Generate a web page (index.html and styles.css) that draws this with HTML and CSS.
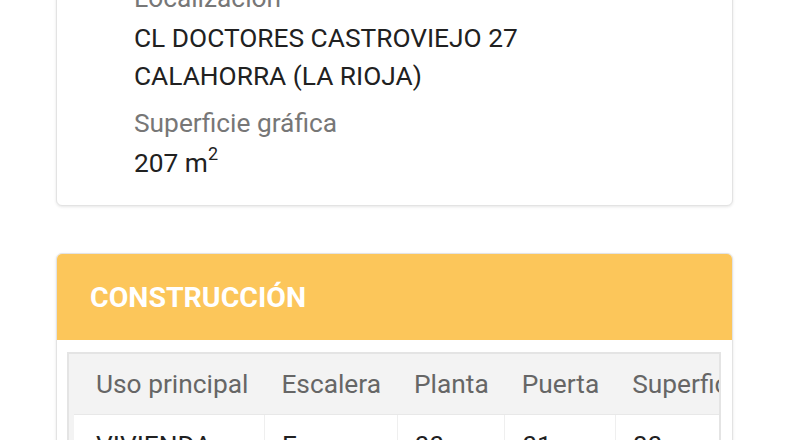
FILE: index.html
```html
<!DOCTYPE html>
<html lang="es">
<head>
    <meta charset="UTF-8">
    <meta name="viewport" content="width=device-width, initial-scale=1.0">
    <title>Consulta descriptiva</title>
    <link rel="stylesheet" href="styles.css">
</head>
<body>
    <main class="page">
        <section class="card info-card">
            <div class="field">
                <div class="field-label">Localización</div>
                <div class="field-value">CL DOCTORES CASTROVIEJO 27<br>CALAHORRA (LA RIOJA)</div>
            </div>
            <div class="field">
                <div class="field-label">Superficie gráfica</div>
                <div class="field-value">207 m<sup>2</sup></div>
            </div>
        </section>

        <section class="card table-card">
            <header class="card-header">
                <h2>CONSTRUCCIÓN</h2>
            </header>
            <div class="table-wrap">
                <table>
                    <thead>
                        <tr>
                            <th>Uso principal</th>
                            <th>Escalera</th>
                            <th>Planta</th>
                            <th>Puerta</th>
                            <th>Superficie m²</th>
                            <th>Tipo Reforma</th>
                        </tr>
                    </thead>
                    <tbody>
                        <tr>
                            <td>VIVIENDA</td>
                            <td>E</td>
                            <td>00</td>
                            <td>01</td>
                            <td>80</td>
                            <td></td>
                        </tr>
                    </tbody>
                </table>
            </div>
        </section>
    </main>
</body>
</html>
```

FILE: styles.css
```css
body {
    margin: 0;
    padding: 0;
    background-color: #FFFFFF;
    font-family: Roboto, 'Liberation Sans', sans-serif;
    font-size: 26.3px;
    color: #212121;
}
.page {
    margin-top: -42px;
    padding: 0 57px 0 56px;
}
.card {
    background-color: #FFFFFF;
    border: 1px solid #E3E3E3;
    border-radius: 6px;
    box-shadow: 0 1px 3px rgba(0,0,0,0.10);
}
.info-card {
    padding: 20px 20px 23px 77px;
}
.field + .field {
    margin-top: 9px;
}
.field-label {
    color: #777777;
    line-height: 38px;
    margin-bottom: 2px;
}
.field-value {
    line-height: 38px;
}
.field-value sup {
    font-size: 18px;
    line-height: 0;
    vertical-align: 12px;
}
.table-card {
    margin-top: 47px;
    overflow: hidden;
    padding-bottom: 20px;
}
.card-header {
    background-color: #FCC65A;
    height: 86px;
    display: flex;
    align-items: center;
    padding-left: 33px;
}
.card-header h2 {
    margin: 0;
    color: #FFFFFF;
    font-size: 28.5px;
    font-weight: bold;
}
.table-wrap {
    margin: 12px 11px 0 10px;
    border: 2px solid #E4E4E4;
    background-color: #F3F3F3;
    overflow: hidden;
}
table {
    border-collapse: collapse;
    margin-left: 5px;
    white-space: nowrap;
}
th, td {
    height: 60px;
    padding: 0 16px 0 17px;
    text-align: left;
    font-weight: normal;
}
th:first-child, td:first-child {
    padding-left: 22px;
}
th {
    color: #666666;
}
td {
    background-color: #FFFFFF;
    border-left: 1px solid #EFEFEF;
    border-top: 1px solid #E8E8E8;
}
td:first-child {
    border-left: none;
}
```
